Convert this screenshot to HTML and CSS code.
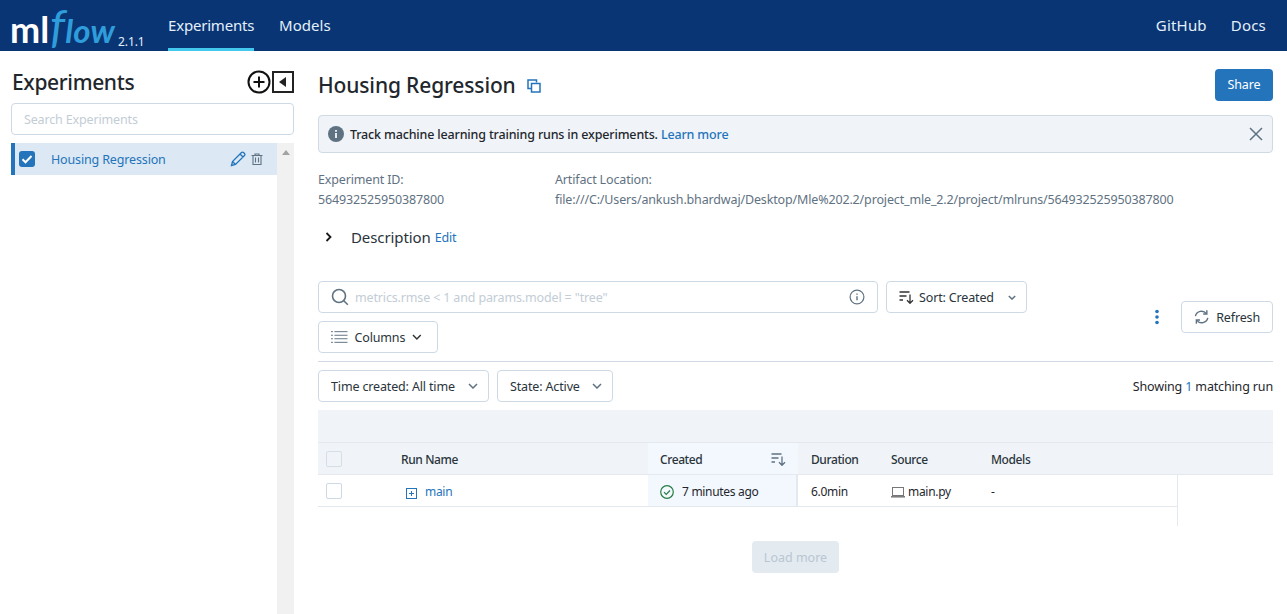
FILE: index.html
```html
<!DOCTYPE html>
<html lang="en">
<head>
<meta charset="utf-8">
<title>MLflow</title>
<link rel="stylesheet" href="styles.css">
</head>
<body>
<header class="topbar">
  <div class="logo"><span class="logo-ml">ml</span><span class="logo-f">f</span><span class="logo-flow">low</span><span class="version">2.1.1</span></div>
  <nav class="nav-left">
    <a class="nav-item active">Experiments</a>
    <a class="nav-item">Models</a>
  </nav>
  <nav class="nav-right">
    <a class="nav-item">GitHub</a>
    <a class="nav-item">Docs</a>
  </nav>
</header>
<div class="page">
  <aside class="sidebar">
    <div class="side-head">
      <h2 class="side-title">Experiments</h2>
      <div class="side-tools">
        <svg width="24" height="24" viewBox="0 0 24 24" fill="none" stroke="#111" stroke-width="2"><circle cx="12" cy="12" r="10.5"/><path d="M6.5 12h11M12 6.5v11"/></svg>
        <svg width="22" height="22" viewBox="0 0 22 22"><rect x="1" y="1" width="20" height="20" fill="none" stroke="#222" stroke-width="2"/><path d="M14 6v10l-7-5z" fill="#222"/></svg>
      </div>
    </div>
    <input class="side-search" placeholder="Search Experiments">
    <div class="side-list">
      <div class="side-row">
        <span class="check"><svg width="16" height="16" viewBox="0 0 16 16" fill="none" stroke="#fff" stroke-width="2"><path d="M3.5 8.2l3 3 6-6.2"/></svg></span>
        <span class="side-name">Housing Regression</span>
        <svg class="edit-ic" width="16" height="16" viewBox="0 0 16 16" fill="none" stroke="#2374bb" stroke-width="1.3"><path d="M1.500 14.500l1-4L11.500 1.500a1.400 1.400 0 0 1 2 0l1 1a1.400 1.400 0 0 1 0 2L5.500 13.500zM2.500 10.500l3 3M10 3l3 3"/></svg>
        <svg class="trash-ic" width="12" height="12" viewBox="0 0 12 12" fill="none" stroke="#5f7282" stroke-width="1.100"><path d="M.5 2.500h11M4 2.500V1h4v1.500M2 2.500v9h8v-9M4.500 4.500v5M7.500 4.500v5"/></svg>
      </div>
      <div class="scrollbar"><span class="scroll-up"></span></div>
    </div>
  </aside>
  <main class="main">
    <div class="title-row">
      <h1 class="title">Housing Regression</h1>
      <svg class="copy-ic" width="14" height="14" viewBox="0 0 14 14" fill="none" stroke="#2374bb" stroke-width="1.500"><path d="M9.500 3.500V1H1v8.500h3"/><rect x="4.500" y="4.500" width="8.500" height="8.500"/></svg>
      <button class="share">Share</button>
    </div>
    <div class="alert">
      <svg width="16" height="16" viewBox="0 0 16 16"><circle cx="8" cy="8" r="8" fill="#5f7282"/><path d="M8 7v5M8 4v1.700" stroke="#fff" stroke-width="1.700"/></svg>
      <span class="alert-text">Track machine learning training runs in experiments. <a class="link">Learn more</a></span>
      <svg class="close-ic" width="14" height="14" viewBox="0 0 14 14" stroke="#5f7282" stroke-width="1.500"><path d="M1 1l12 12M13 1L1 13"/></svg>
    </div>
    <div class="meta">
      <div class="meta-id"><div>Experiment ID:</div><div>564932525950387800</div></div>
      <div><div>Artifact Location:</div><div>file:///C:/Users/ankush.bhardwaj/Desktop/Mle%202.2/project_mle_2.2/project/mlruns/564932525950387800</div></div>
    </div>
    <div class="desc">
      <svg width="10" height="12" viewBox="0 0 10 12" fill="none" stroke="#1a1a1a" stroke-width="1.800"><path d="M2.500 2l4 4-4 4"/></svg>
      <span class="desc-label">Description</span><a class="link desc-edit">Edit</a>
    </div>
    <div class="controls">
      <div class="controls-left">
        <div class="searchbox">
          <svg width="18" height="18" viewBox="0 0 18 18" fill="none" stroke="#5f7282" stroke-width="1.600"><circle cx="8" cy="8" r="6.500"/><path d="M12.800 12.800l4 4"/></svg>
          <span class="placeholder">metrics.rmse &lt; 1 and params.model = "tree"</span>
          <svg class="info-ic" width="16" height="16" viewBox="0 0 16 16" fill="none" stroke="#5f7282" stroke-width="1.200"><circle cx="8" cy="8" r="6.900"/><path d="M8 7.200v4M8 4.500v1.300" stroke-width="1.400"/></svg>
        </div>
        <div class="btn sort">
          <svg width="15" height="14" viewBox="0 0 15 14" fill="none" stroke="#333" stroke-width="1.300"><path d="M.5 2h10M.5 6h7M.5 10h3.500M11 4.500v8.500M8 10.300l3 3 3-3"/></svg>
          <span>Sort: Created</span>
          <svg class="chev" width="8" height="5" viewBox="0 0 10 6" fill="none" stroke="#5f7282" stroke-width="1.800"><path d="M1 1l4 4 4-4"/></svg>
        </div>
        <div class="btn columns">
          <svg width="17" height="12" viewBox="0 0 17 12" fill="none" stroke="#5f7282" stroke-width="1"><path d="M0 .5h2M3.500 .5H17M0 4.200h2M3.500 4.200H17M0 7.800h2M3.500 7.800H17M0 11.500h2M3.500 11.500H17"/></svg>
          <span>Columns</span>
          <svg class="chev" width="10" height="6" viewBox="0 0 10 6" fill="none" stroke="#333" stroke-width="1.500"><path d="M1 1l4 4 4-4"/></svg>
        </div>
      </div>
      <div class="controls-right">
        <svg width="4" height="16" viewBox="0 0 4 16" fill="#2374bb"><circle cx="2" cy="2.500" r="1.800"/><circle cx="2" cy="8" r="1.800"/><circle cx="2" cy="13.500" r="1.800"/></svg>
        <div class="btn refresh">
          <svg width="17" height="16" viewBox="0 0 16 15" fill="none" stroke="#5f7282" stroke-width="1.500"><path d="M1.500 6.500A6.500 6.500 0 0 1 13 4M14.500 8.500A6.500 6.500 0 0 1 3 11"/><path d="M13.500 .5v3.800h-3.800M2.500 14.500v-3.800h3.800"/></svg>
          <span>Refresh</span>
        </div>
      </div>
    </div>
    <hr class="rule">
    <div class="filters">
      <div class="btn time"><span>Time created: All time</span><svg class="chev" width="10" height="6" viewBox="0 0 10 6" fill="none" stroke="#5f7282" stroke-width="1.500"><path d="M1 1l4 4 4-4"/></svg></div>
      <div class="btn state"><span>State: Active</span><svg class="chev" width="10" height="6" viewBox="0 0 10 6" fill="none" stroke="#5f7282" stroke-width="1.500"><path d="M1 1l4 4 4-4"/></svg></div>
      <div class="showing">Showing <span class="count">1</span> matching run</div>
    </div>
    <div class="table">
      <div class="head-band"></div>
      <div class="tr th-row">
        <div class="td c-check"><span class="cb cb-head"></span></div>
        <div class="td c-name th-name">Run Name</div>
        <div class="td c-created sorted">Created
          <svg width="15" height="14" viewBox="0 0 15 14" fill="none" stroke="#5f7282" stroke-width="1.300"><path d="M.5 2h10M.5 6h7M.5 10h3.500M11 4.500v8.500M8 10.300l3 3 3-3"/></svg>
        </div>
        <div class="td c-dur">Duration</div>
        <div class="td c-src">Source</div>
        <div class="td c-models">Models</div>
      </div>
      <div class="tr body-row">
        <div class="td c-check"><span class="cb"></span></div>
        <div class="td c-name run-name">
          <svg class="expand-ic" width="11" height="11" viewBox="0 0 11 11" fill="none" stroke="#2374bb"><rect x=".5" y=".5" width="10" height="10"/><path d="M3 5.500h5M5.500 3v5"/></svg>
          <a class="link">main</a>
        </div>
        <div class="td c-created sorted-cell">
          <svg width="14" height="14" viewBox="0 0 14 14" fill="none" stroke="#277c43" stroke-width="1.200"><circle cx="7" cy="7" r="6.300"/><path d="M4 7.200l2.200 2.200L10 5.500"/></svg>
          <span>7 minutes ago</span>
        </div>
        <div class="td c-dur">6.0min</div>
        <div class="td c-src">
          <svg width="14" height="12" viewBox="0 0 14 12" fill="none" stroke="#777"><rect x="1.500" y="1.500" width="11" height="8"/><path d="M0 10.800h14" stroke-width="1.500"/></svg>
          <span>main.py</span>
        </div>
        <div class="td c-models">-</div>
      </div>
      <div class="table-tail"></div>
    </div>
    <div class="load-wrap"><button class="load">Load more</button></div>
  </main>
</div>
</body>
</html>
```
FILE: styles.css
```css
* { box-sizing: border-box; }
html, body { margin: 0; height: 100%; overflow: hidden; }
body {
  font-family: "Noto Sans", "Open Sans", sans-serif;
  font-size: 12.5px;
  letter-spacing: -.15px;
  color: #1f272d;
  background: #fff;
}
a { text-decoration: none; }
.link { color: #2374bb; }

.topbar {
  height: 51px;
  background: #0a3574;
  display: flex;
  align-items: stretch;
  color: #e4f0fa;
}
.logo { width: 157px; padding: 4px 0 0 10px; display: flex; align-items: baseline; height: 51px; line-height: 42px; letter-spacing: 0; }
.logo-ml { font-family: "Lato", sans-serif; font-weight: 700; font-size: 36px; color: #fff; }
.logo-f { font-family: "Lato", sans-serif; font-style: italic; font-weight: 400; font-size: 47px; color: #2f9ddb; margin-left: 1px; }
.logo-flow { font-family: "Lato", sans-serif; font-style: italic; font-weight: 700; font-size: 33px; color: #2f9ddb; letter-spacing: .2px; }
.version { font-size: 12px; color: #e4f0fa; margin-left: 3px; position: relative; top: 3px; letter-spacing: -.1px; }
.nav-left { display: flex; gap: 25px; margin-left: 11px; }
.nav-right { display: flex; gap: 24px; margin-left: auto; padding-right: 21px; }
.nav-item { font-size: 15px; letter-spacing: .05px; line-height: 50px; height: 51px; color: #e4f0fa; }
.nav-right .nav-item { letter-spacing: .2px; }
.active { border-bottom: 3px solid #43c9ed; width: 86px; text-align: center; white-space: nowrap; letter-spacing: -.2px; }

.page { display: flex; height: 563px; }
.sidebar { width: 283px; margin-left: 11px; flex: none; display: flex; flex-direction: column; }
.side-head { height: 52px; display: flex; align-items: center; justify-content: space-between; padding-top: 10px; }
.side-title { font-size: 21px; font-weight: 500; margin: 0 0 0 1px; letter-spacing: -.35px; color: #1f272d; }
.side-tools { display: flex; align-items: center; gap: 1px; }
.side-search {
  height: 32px; width: 283px; border: 1px solid #cdd9e4; border-radius: 4px;
  font: inherit; padding: 0 12px; outline: none; letter-spacing: -.15px; flex: none;
}
.side-search::placeholder { color: #c3cdd6; opacity: 1; }
.side-list { margin-top: 8px; flex: 1; display: flex; align-items: flex-start; height: 471px; }
.side-row {
  width: 266px; height: 32px; background: #dce8f3; border-left: 4px solid #2374bb;
  display: flex; align-items: center; padding-left: 4px; color: #2374bb;
}
.check { width: 16px; height: 16px; background: #2374bb; border-radius: 3px; display: block; }
.check svg { display: block; }
.side-name { margin-left: 16px; }
.edit-ic { margin-left: auto; }
.trash-ic { margin: 0 14px 0 5px; }
.scrollbar { width: 17px; align-self: stretch; background: #f1f1f1; position: relative; }
.scroll-up { position: absolute; left: 5px; top: 7px; border: 4px solid transparent; border-top: 0; border-bottom: 5px solid #a3a3a3; }

.main { flex: 1; padding: 0 14px 0 24px; min-width: 0; }
.title-row { display: flex; align-items: center; height: 64px; padding-top: 3px; }
.title { font-size: 21px; font-weight: 500; margin: 0; letter-spacing: -.14px; color: #1f272d; }
.copy-ic { margin-left: 11px; margin-top: 3px; }
.share {
  margin-left: auto; width: 58px; height: 32px; background: #2374bb; border: 0; border-radius: 4px;
  color: #fff; font: inherit; letter-spacing: -.15px;
}
.alert {
  height: 38px; background: #f0f4f8; border: 1px solid #cfdae5; border-radius: 4px;
  display: flex; align-items: center; padding: 0 9px;
}
.alert-text { margin-left: 6px; font-weight: 500; letter-spacing: -.16px; }
.alert-text .link { font-weight: 500; }
.close-ic { margin-left: auto; }
.meta { display: flex; margin-top: 17px; color: #5f7282; line-height: 20px; }
.meta-id { width: 237px; }
.desc { display: flex; align-items: center; margin-top: 17px; height: 20px; padding-left: 6px; }
.desc-label { font-size: 15px; margin-left: 17px; letter-spacing: -.1px; color: #2a343b; }
.desc-edit { margin-left: 4px; padding-top: 1px; }
.controls { margin-top: 34px; display: flex; justify-content: space-between; align-items: center; }
.controls-left { display: flex; flex-wrap: wrap; gap: 8px; width: 720px; }
.controls-right { display: flex; align-items: center; gap: 22px; }
.searchbox {
  width: 560px; height: 32px; border: 1px solid #cdd9e4; border-radius: 4px;
  display: flex; align-items: center; padding: 0 12px; gap: 6px;
}
.placeholder { color: #c3cdd6; }
.info-ic { margin-left: auto; }
.btn {
  height: 32px; border: 1px solid #cdd9e4; border-radius: 4px; background: #fff;
  display: flex; align-items: center; padding: 0 12px; color: #2a343b;
}
.sort { width: 141px; gap: 5px; padding-right: 10px; }
.sort .chev { margin-left: auto; }
.columns { width: 120px; gap: 7px; padding-right: 15px; }
.columns .chev { margin-left: auto; }
.refresh { width: 92px; gap: 7px; }
.rule { border: 0; border-top: 1px solid #cfdae5; margin: 8px 0 8px; }
.filters { display: flex; align-items: center; gap: 8px; }
.time { width: 171px; justify-content: space-between; padding-right: 10px; }
.state { width: 116px; justify-content: space-between; padding-right: 10px; }
.showing { margin-left: auto; }
.count { color: #2374bb; }

.table { margin-top: 8px; position: relative; }
.head-band { height: 33px; background: #f0f4f8; border-bottom: 1px solid #e3e9ef; }
.tr { display: flex; height: 32px; }
.th-row { background: #f0f4f8; border-bottom: 1px solid #e3e9ef; font-weight: 500; color: #2a343b; letter-spacing: -.4px; font-size: 12px; }
.th-row .td { padding-top: 1px; }
.th-row .th-name { padding-left: 1px; }
.body-row { border-bottom: 1px solid #e3e9ef; width: 859px; letter-spacing: -.3px; font-size: 12px; }
.body-row .td { padding-top: 2px; }
.body-row .c-check { padding-top: 0; }
.td { display: flex; align-items: center; }
.c-check { width: 82px; padding-left: 8px; }
.c-name { width: 248px; }
.c-created { width: 150px; padding: 0 12px; justify-content: space-between; }
.c-dur { width: 93px; padding-left: 13px; }
.c-src { width: 100px; gap: 3px; }
.c-models { flex: 1; }
.sorted { background: #f2f8fe; }
.sorted-cell { background: #f2f8fe; border-right: 2px solid #e3e9ef; justify-content: flex-start; gap: 8px; }
.cb { width: 16px; height: 16px; border: 1px solid #cdd9e4; border-radius: 2px; background: #fff; }
.cb-head { background: #f0f4f8; border-color: #d5dee6; }
.run-name { padding-left: 6px; gap: 8px; }
.expand-ic { margin-top: 4px; }
.table-tail { width: 860px; border-right: 1px solid #e3e9ef; margin-top: -32px; height: 51px; pointer-events: none; }
.load-wrap { display: flex; justify-content: center; margin-top: 15px; }
.load { width: 87px; height: 32px; border: 0; border-radius: 4px; background: #e3eaf0; color: #b9c6d2; font: inherit; }
```
